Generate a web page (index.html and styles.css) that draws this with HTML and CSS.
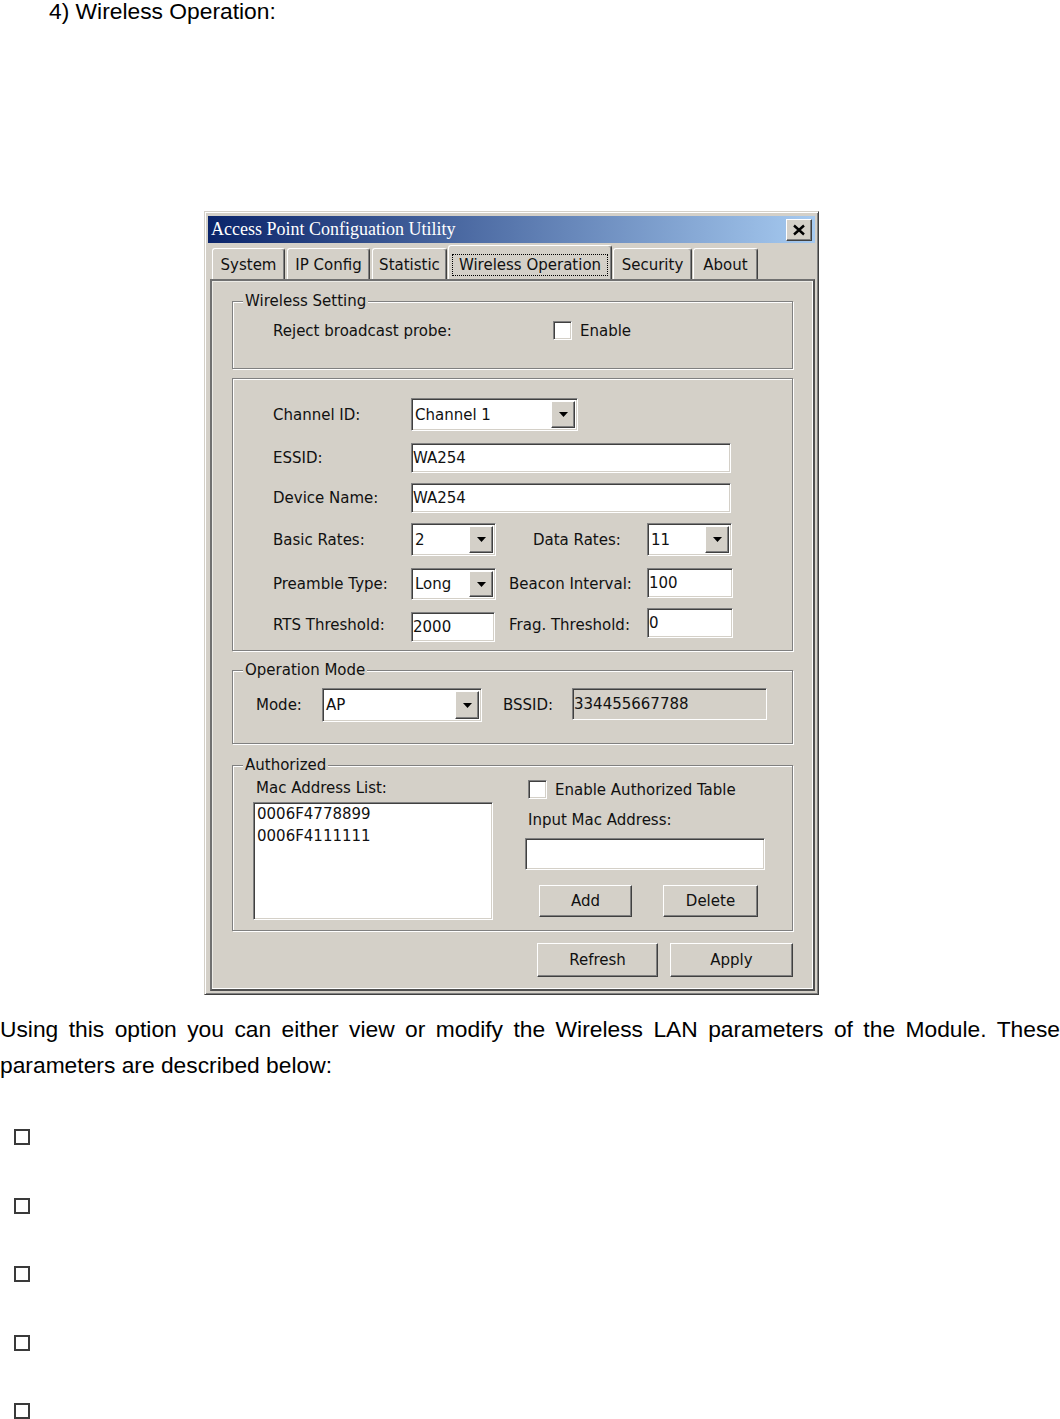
FILE: index.html
```html
<!DOCTYPE html>
<html lang="en">
<head>
<meta charset="utf-8">
<title>Wireless Operation</title>
<link rel="stylesheet" href="styles.css">
</head>
<body>
<h1 class="heading">4) Wireless Operation:</h1>

<div class="window">
  <div class="titlebar">
    <span class="title-text">Access Point Configuation Utility</span>
    <span class="close-btn"><svg width="14" height="12" viewBox="0 0 14 12"><path d="M2 1.5L12 10.5M12 1.5L2 10.5" stroke="#000" stroke-width="2.4" fill="none"/></svg></span>
  </div>

  <div class="tabs">
    <span class="tab t-system">System</span>
    <span class="tab t-ip">IP Config</span>
    <span class="tab t-stat">Statistic</span>
    <span class="tab tab-selected t-wo"><span class="focus">Wireless Operation</span></span>
    <span class="tab t-sec">Security</span>
    <span class="tab t-about">About</span>
  </div>

  <div class="panel">
    <div class="group g-ws">
      <span class="group-title">Wireless Setting</span>
      <div class="row row-reject">
        <span class="lbl lbl-reject">Reject broadcast probe:</span>
        <span class="checkbox"></span>
        <span class="cb-text">Enable</span>
      </div>
    </div>

    <div class="group g-params">
      <div class="prow r1">
        <span class="lbl lbl-a">Channel ID:</span>
        <div class="sel w-channel h33"><span class="val">Channel 1</span><span class="drop"><svg width="9" height="5" viewBox="0 0 9 5"><path d="M0 0H9L4.5 5Z" fill="#000"/></svg></span></div>
      </div>
      <div class="prow r2">
        <span class="lbl lbl-a">ESSID:</span>
        <div class="field w-wide h30">WA254</div>
      </div>
      <div class="prow r3">
        <span class="lbl lbl-a">Device Name:</span>
        <div class="field w-wide h30">WA254</div>
      </div>
      <div class="prow r4">
        <span class="lbl lbl-a">Basic Rates:</span>
        <div class="sel w85 h33"><span class="val">2</span><span class="drop"><svg width="9" height="5" viewBox="0 0 9 5"><path d="M0 0H9L4.5 5Z" fill="#000"/></svg></span></div>
        <span class="lbl lbl-data">Data Rates:</span>
        <div class="sel w85 h33"><span class="val">11</span><span class="drop"><svg width="9" height="5" viewBox="0 0 9 5"><path d="M0 0H9L4.5 5Z" fill="#000"/></svg></span></div>
      </div>
      <div class="prow r5">
        <span class="lbl lbl-a">Preamble Type:</span>
        <div class="sel w85 h32"><span class="val">Long</span><span class="drop"><svg width="9" height="5" viewBox="0 0 9 5"><path d="M0 0H9L4.5 5Z" fill="#000"/></svg></span></div>
        <span class="lbl lbl-beacon">Beacon Interval:</span>
        <div class="field w86 h30 top">100</div>
      </div>
      <div class="prow r6">
        <span class="lbl lbl-a">RTS Threshold:</span>
        <div class="field w84 h30 bottom">2000</div>
        <span class="lbl lbl-frag">Frag. Threshold:</span>
        <div class="field w86 h30 top">0</div>
      </div>
    </div>

    <div class="group g-op">
      <span class="group-title">Operation Mode</span>
      <div class="row row-mode">
        <span class="lbl lbl-mode">Mode:</span>
        <div class="sel w160 h34"><span class="val">AP</span><span class="drop"><svg width="9" height="5" viewBox="0 0 9 5"><path d="M0 0H9L4.5 5Z" fill="#000"/></svg></span></div>
        <span class="lbl lbl-bssid">BSSID:</span>
        <div class="field disabled w195 h32 top">334455667788</div>
      </div>
    </div>

    <div class="group g-auth">
      <span class="group-title">Authorized</span>
      <div class="auth-cols">
        <div class="auth-left">
          <span class="lbl lbl-mac">Mac Address List:</span>
          <div class="listbox">
            <div class="item">0006F4778899</div>
            <div class="item">0006F4111111</div>
          </div>
        </div>
        <div class="auth-right">
          <div class="cb-row">
            <span class="checkbox"></span>
            <span class="cb-text">Enable Authorized Table</span>
          </div>
          <span class="lbl lbl-input">Input Mac Address:</span>
          <div class="field w240 h32 mac-input"></div>
          <div class="btn-row">
            <span class="btn btn-add">Add</span>
            <span class="btn btn-delete">Delete</span>
          </div>
        </div>
      </div>
    </div>

    <div class="actions">
      <span class="btn btn-refresh">Refresh</span>
      <span class="btn btn-apply">Apply</span>
    </div>
  </div>
</div>

<p class="intro">Using this option you can either view or modify the Wireless LAN parameters of the Module. These parameters are described below:</p>

<div class="bullets" aria-hidden="true">
  <span class="bullet"></span>
  <span class="bullet"></span>
  <span class="bullet"></span>
  <span class="bullet"></span>
  <span class="bullet"></span>
</div>
</body>
</html>
```

FILE: styles.css
```css
* { box-sizing: border-box; }

html, body {
  margin: 0;
  padding: 0;
  background: #fff;
}

body {
  width: 1060px;
  font-family: "Liberation Sans", Arial, sans-serif;
  color: #000;
}

.heading {
  margin: 0;
  padding-left: 49px;
  font-size: 22.8px;
  font-weight: normal;
  line-height: 22px;
}

/* ---------- dialog window ---------- */
.window {
  margin: 189px 0 0 204px;
  width: 615px;
  height: 784px;
  background: #d4d0c8;
  border: 1px solid;
  border-color: #d4d0c8 #404040 #404040 #d4d0c8;
  box-shadow: inset 1px 1px 0 #fff, inset -1px -1px 0 #808080;
  padding: 4px 3px 3px 3px;
  font-family: "DejaVu Sans", Verdana, sans-serif;
  font-size: 15px;
  color: #111;
  display: flex;
  flex-direction: column;
}

.titlebar {
  height: 27px;
  flex: none;
  display: flex;
  align-items: center;
  justify-content: space-between;
  padding: 0 3px;
  background: linear-gradient(to right, #0a246a, #a6caf0);
}

.title-text {
  font-family: "Liberation Serif", "Times New Roman", serif;
  font-size: 18px;
  line-height: 27px;
  color: #fff;
  white-space: nowrap;
}

.close-btn {
  width: 26px;
  height: 22px;
  display: flex;
  align-items: center;
  justify-content: center;
  background: #d4d0c8;
  border: 1px solid;
  border-color: #fff #404040 #404040 #fff;
  box-shadow: inset -1px -1px 0 #808080;
}

/* ---------- tabs ---------- */
.tabs {
  height: 36px;
  flex: none;
  display: flex;
  align-items: flex-end;
  padding: 2px 0 0 4px;
}

.tab {
  height: 31px;
  padding-top: 7px;
  line-height: 18px;
  text-align: center;
  white-space: nowrap;
  background: #d4d0c8;
  border-top: 1px solid #fff;
  border-left: 1px solid #fff;
  border-right: 1px solid #404040;
  box-shadow: inset -1px 0 0 #808080;
  border-radius: 3px 3px 0 0;
}

.t-system { width: 73px; }
.t-ip { width: 83px; margin-left: 2px; }
.t-stat { width: 75px; margin-left: 2px; }
.t-wo { width: 164px; margin-left: 1px; }
.t-sec { width: 79px; margin-left: 1px; }
.t-about { width: 65px; margin-left: 1px; }

.tab-selected {
  height: 34px;
  padding-top: 8px;
  display: flex;
  justify-content: center;
  align-items: flex-start;
}

.focus {
  border: 1px dotted #000;
  padding: 0 6px;
  line-height: 20px;
}

/* ---------- panel ---------- */
.panel {
  margin-left: 2px;
  width: 605px;
  height: 712px;
  flex: none;
  border: 2px solid;
  border-color: #707070 #505050 #505050 #707070;
  box-shadow: inset -1px -1px 0 #fff, inset 1px 1px 0 #ecebe6;
  padding: 0 20px;
  display: flex;
  flex-direction: column;
}

.group {
  flex: none;
  border: 1px solid #808080;
  box-shadow: inset 1px 1px 0 #fff, 1px 1px 0 #fff;
  display: flex;
  flex-direction: column;
}

.group-title {
  align-self: flex-start;
  margin: -10px 0 0 10px;
  padding: 0 2px;
  line-height: 18px;
  background: #d4d0c8;
  white-space: nowrap;
}

.lbl {
  white-space: nowrap;
  line-height: 18px;
  flex: none;
}

.row, .prow {
  display: flex;
  align-items: center;
}

/* Wireless Setting */
.g-ws { margin-top: 20px; height: 68px; }
.row-reject { margin-top: 11px; padding-left: 40px; height: 19px; }
.lbl-reject { width: 280px; }

.checkbox {
  flex: none;
  width: 19px;
  height: 19px;
  background: #fff;
  border: 1px solid;
  border-color: #808080 #fff #fff #808080;
  box-shadow: inset 1px 1px 0 #404040, inset -1px -1px 0 #d4d0c8;
}

.cb-text {
  margin-left: 8px;
  line-height: 18px;
  white-space: nowrap;
}

/* Parameters */
.g-params { margin-top: 9px; height: 273px; padding: 19px 0 0 40px; }
.lbl-a { width: 138px; }
.r2 { margin-top: 12px; }
.r3 { margin-top: 10px; }
.r4 { margin-top: 10px; }
.r5 { margin-top: 12px; }
.r6 { margin-top: 8px; height: 34px; }
.lbl-data { margin-left: 37px; width: 114px; }
.lbl-beacon { margin-left: 13px; width: 138px; }
.lbl-frag { margin-left: 14px; width: 138px; }

.top { align-self: flex-start; }
.bottom { align-self: flex-end; }

/* sunken field */
.field, .sel, .listbox {
  flex: none;
  background: #fff;
  border: 1px solid;
  border-color: #808080 #fff #fff #808080;
  box-shadow: inset 1px 1px 0 #404040, inset -1px -1px 0 #d4d0c8;
  white-space: nowrap;
  overflow: hidden;
}

.field {
  display: flex;
  align-items: center;
  padding-left: 1px;
}

.field.disabled { background: #d4d0c8; }

.sel {
  display: flex;
  align-items: stretch;
  padding: 2px 2px 2px 3px;
}

.sel .val {
  display: flex;
  align-items: center;
  flex: 1;
}

.drop {
  flex: none;
  width: 24px;
  display: flex;
  align-items: center;
  justify-content: center;
  background: #d4d0c8;
  border: 1px solid;
  border-color: #fff #404040 #404040 #fff;
  box-shadow: inset -1px -1px 0 #808080;
}

.w-channel { width: 167px; }
.w-wide { width: 320px; }
.w84 { width: 84px; }
.w85 { width: 85px; }
.w86 { width: 86px; }
.w160 { width: 160px; }
.w195 { width: 195px; }
.w240 { width: 240px; }
.h30 { height: 30px; }
.h32 { height: 32px; }
.h33 { height: 33px; }
.h34 { height: 34px; }

/* Operation Mode */
.g-op { margin-top: 19px; height: 74px; }
.row-mode { margin-top: 9px; padding-left: 23px; height: 34px; }
.lbl-mode { width: 66px; }
.lbl-bssid { margin-left: 21px; width: 69px; }

/* Authorized */
.g-auth { margin-top: 21px; height: 166px; }
.auth-cols { display: flex; padding-left: 20px; }
.auth-left { width: 240px; display: flex; flex-direction: column; }
.lbl-mac { margin: 5px 0 0 3px; }
.listbox {
  margin-top: 5px;
  width: 240px;
  height: 118px;
  padding-left: 3px;
  line-height: 22px;
}

.auth-right { margin-left: 32px; width: 240px; display: flex; flex-direction: column; align-items: flex-start; }
.cb-row { display: flex; align-items: center; margin: 6px 0 0 3px; height: 19px; }
.lbl-input { margin: 12px 0 0 3px; }
.mac-input { margin-top: 9px; }
.btn-row { display: flex; margin-top: 15px; }

.btn {
  flex: none;
  display: flex;
  align-items: center;
  justify-content: center;
  background: #d4d0c8;
  border: 1px solid;
  border-color: #fff #404040 #404040 #fff;
  box-shadow: inset -1px -1px 0 #808080;
  white-space: nowrap;
}

.btn-add { margin-left: 14px; width: 93px; height: 32px; }
.btn-delete { margin-left: 31px; width: 95px; height: 32px; }

.actions {
  display: flex;
  justify-content: flex-end;
  gap: 12px;
  margin-top: 12px;
}

.btn-refresh { width: 121px; height: 34px; }
.btn-apply { width: 123px; height: 34px; }

/* ---------- text below ---------- */
.intro {
  margin: 16px 0 0 0;
  width: 1060px;
  font-size: 22.8px;
  line-height: 36px;
  text-align: justify;
}

.bullets {
  margin-top: 46px;
  padding-left: 14px;
  display: flex;
  flex-direction: column;
  gap: 52.5px;
}

.bullet {
  display: block;
  width: 16px;
  height: 16px;
  border: 2px solid #3a3a3a;
  background: #fff;
}
```
